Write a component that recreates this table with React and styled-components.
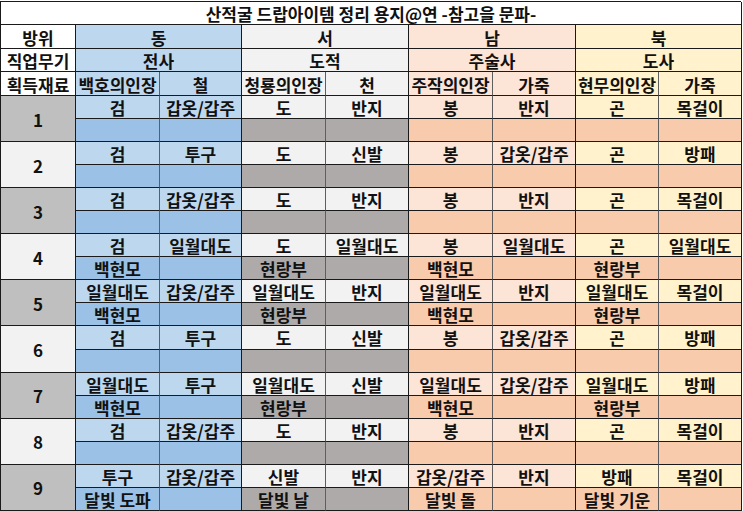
import React from 'react'
import styled, { createGlobalStyle } from 'styled-components'

const GlobalStyle = createGlobalStyle`
  html, body {
    margin: 0;
    padding: 0;
    background: #ffffff;
  }
  body {
    padding-top: 1px;
    font-family: "Noto Sans CJK KR", "Noto Sans", sans-serif;
  }
`

const colors = {
  east: { light: '#bdd7ee', dark: '#9bc2e6' },
  west: { light: '#f2f2f2', dark: '#aeaaaa' },
  south: { light: '#fce4d6', dark: '#f8cbad' },
  north: { light: '#fff2cc', dark: '#f8cbad' },
}

const groups = [
  { key: 'east', dir: '동', job: '전사', mats: ['백호의인장', '철'] },
  { key: 'west', dir: '서', job: '도적', mats: ['청룡의인장', '천'] },
  { key: 'south', dir: '남', job: '주술사', mats: ['주작의인장', '가죽'] },
  { key: 'north', dir: '북', job: '도사', mats: ['현무의인장', '가죽'] },
]

const hyun = ['백현모', '', '현랑부', '', '백현모', '', '현랑부', '']
const empty = ['', '', '', '', '', '', '', '']

const rows = [
  { top: ['검', '갑옷/갑주', '도', '반지', '봉', '반지', '곤', '목걸이'], bottom: empty },
  { top: ['검', '투구', '도', '신발', '봉', '갑옷/갑주', '곤', '방패'], bottom: empty },
  { top: ['검', '갑옷/갑주', '도', '반지', '봉', '반지', '곤', '목걸이'], bottom: empty },
  { top: ['검', '일월대도', '도', '일월대도', '봉', '일월대도', '곤', '일월대도'], bottom: hyun },
  { top: ['일월대도', '갑옷/갑주', '일월대도', '반지', '일월대도', '반지', '일월대도', '목걸이'], bottom: hyun },
  { top: ['검', '투구', '도', '신발', '봉', '갑옷/갑주', '곤', '방패'], bottom: empty },
  { top: ['일월대도', '투구', '일월대도', '신발', '일월대도', '갑옷/갑주', '일월대도', '방패'], bottom: hyun },
  { top: ['검', '갑옷/갑주', '도', '반지', '봉', '반지', '곤', '목걸이'], bottom: empty },
  {
    top: ['투구', '갑옷/갑주', '신발', '반지', '갑옷/갑주', '반지', '방패', '목걸이'],
    bottom: ['달빛 도파', '', '달빛 날', '', '달빛 돌', '', '달빛 기운', ''],
  },
]

const Sheet = styled.div`
  display: grid;
  width: 741px;
  grid-template-columns: 75px 84px 82px 84px 83px 84px 83px 83px 83px;
  grid-template-rows: 23px 24px 23px 24px repeat(18, 23.06px);
  border-top: 1px solid #1a1a1a;
  border-left: 1px solid #1a1a1a;
  box-sizing: border-box;
`

const Cell = styled.div`
  box-sizing: border-box;
  display: flex;
  align-items: center;
  justify-content: center;
  grid-column: span ${(p) => p.$cols || 1};
  grid-row: span ${(p) => p.$rows || 1};
  background: ${(p) => p.$bg || '#ffffff'};
  border-right: 1px solid ${(p) => (p.$inner ? '#5e5e5e' : '#1a1a1a')};
  border-bottom: 1px solid #1a1a1a;
  color: #111111;
  font-size: 17px;
  font-weight: 700;
  line-height: 1;
  padding-top: 1px;
  white-space: nowrap;
  overflow: hidden;
`

const Title = styled(Cell)`
  grid-column: 1 / -1;
  border-right: 1px solid #1a1a1a;
`

const NumberCell = styled(Cell)`
  font-size: 17px;
`

export default function App() {
  return (
    <>
      <GlobalStyle />
      <Sheet>
        <Title>산적굴 드랍아이템 정리 용지@연 -참고을 문파-</Title>

        <Cell>방위</Cell>
        {groups.map((g) => (
          <Cell key={g.key} $cols={2} $bg={colors[g.key].light}>
            {g.dir}
          </Cell>
        ))}

        <Cell>직업무기</Cell>
        {groups.map((g) => (
          <Cell key={g.key} $cols={2} $bg={colors[g.key].light}>
            {g.job}
          </Cell>
        ))}

        <Cell>획득재료</Cell>
        {groups.map((g) =>
          g.mats.map((m, i) => (
            <Cell key={g.key + i} $inner={i === 0} $bg={colors[g.key].light}>
              {m}
            </Cell>
          ))
        )}

        {rows.map((row, n) => (
          <React.Fragment key={n}>
            <NumberCell $rows={2} $bg={n % 2 === 0 ? '#bfbfbf' : '#f2f2f2'}>
              {n + 1}
            </NumberCell>
            {row.top.map((t, i) => (
              <Cell key={'t' + i} $inner={i % 2 === 0} $bg={colors[groups[i >> 1].key].light}>
                {t}
              </Cell>
            ))}
            {row.bottom.map((t, i) => (
              <Cell key={'b' + i} $inner={i % 2 === 0} $bg={colors[groups[i >> 1].key].dark}>
                {t}
              </Cell>
            ))}
          </React.Fragment>
        ))}
      </Sheet>
    </>
  )
}
